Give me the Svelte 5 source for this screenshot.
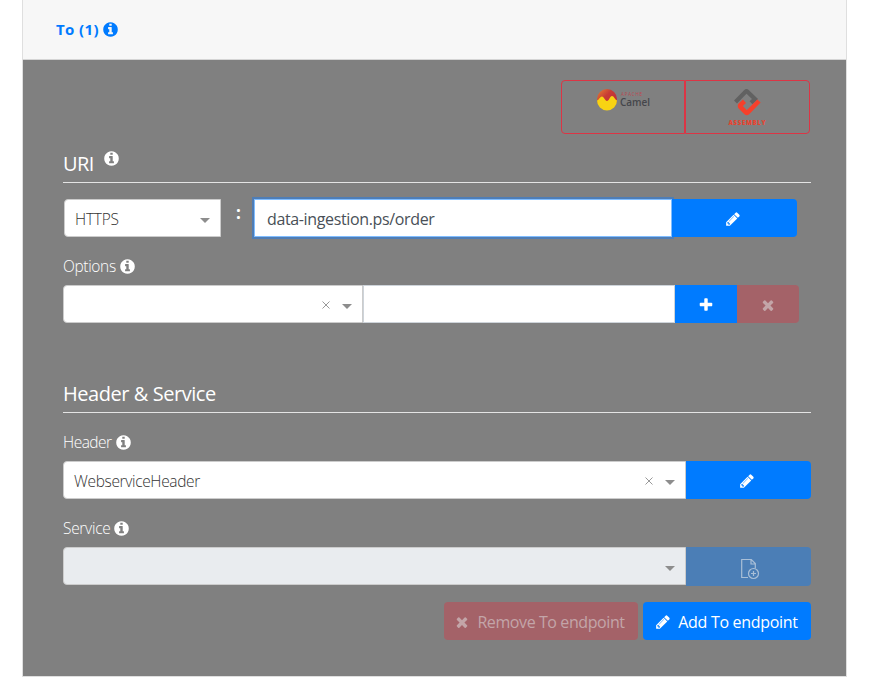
<script>
  const icons = {
    info: 'M1152 1376v-160q0-14-9-23t-23-9h-96v-512q0-14-9-23t-23-9h-320q-14 0-23 9t-9 23v160q0 14 9 23t23 9h96v320h-96q-14 0-23 9t-9 23v160q0 14 9 23t23 9h448q14 0 23-9t9-23zm-128-896v-160q0-14-9-23t-23-9h-192q-14 0-23 9t-9 23v160q0 14 9 23t23 9h192q14 0 23-9t9-23zm640 416q0 209-103 385.5t-279.5 279.5-385.5 103-385.5-103-279.5-279.5-103-385.5 103-385.5 279.5-279.5 385.5-103 385.5 103 279.5 279.5 103 385.5z',
    pencil: 'M491 1536l91-91-235-235-91 91v107h128v128h107zm523-928q0-22-22-22-10 0-17 7l-542 542q-7 7-7 17 0 22 22 22 10 0 17-7l542-542q7-7 7-17zm-54-192l416 416-832 832h-416v-416zm683 96q0 53-37 90l-166 166-416-416 166-165q36-38 90-38 53 0 91 38l235 234q37 39 37 91z',
    plus: 'M1600 736v192q0 40-28 68t-68 28h-416v416q0 40-28 68t-68 28h-192q-40 0-68-28t-28-68v-416h-416q-40 0-68-28t-28-68v-192q0-40 28-68t68-28h416v-416q0-40 28-68t68-28h192q40 0 68 28t28 68v416h416q40 0 68 28t28 68z',
    times: 'M1490 1322q0 40-28 68l-136 136q-28 28-68 28t-68-28l-294-294-294 294q-28 28-68 28t-68-28l-136-136q-28-28-28-68t28-68l294-294-294-294q-28-28-28-68t28-68l136-136q28-28 68-28t68 28l294 294 294-294q28-28 68-28t68 28l136 136q28 28 28 68t-28 68l-294 294 294 294q28 28 28 68z'
  };
  let uri = $state('data-ingestion.ps/order');
  let option = $state('');
</script>

{#snippet icon(name)}
  <svg class="icon {name}" viewBox="0 0 1792 1792" aria-hidden="true"><path d={icons[name]} /></svg>
{/snippet}

{#snippet caret()}
  <svg class="caret" viewBox="0 0 10 5" aria-hidden="true"><path d="M0 0h10L5 5z" /></svg>
{/snippet}

{#snippet clear()}
  <svg class="clear" viewBox="0 0 8 8" aria-hidden="true"><path d="M.5.5l7 7M7.500.5L.5 7.500" /></svg>
{/snippet}

<section class="card">
  <header><a href="#to"><span class="to">To (1)</span>{@render icon('info')}</a></header>
  <div class="body">
    <div class="logos">
      <button class="logo camel" aria-label="Camel">
        <svg viewBox="0 0 122 52">
          <defs>
            <linearGradient id="sky" x1="0" y1="0" x2="1" y2="1">
              <stop offset="0" stop-color="#e68432" />
              <stop offset=".4" stop-color="#c83b35" />
              <stop offset="1" stop-color="#b52540" />
            </linearGradient>
          </defs>
          <circle cx="45" cy="18" r="10" fill="url(#sky)" />
          <path d="M35 19.500c2-.5 3-4 5-4s3 4.500 5 4.500 3-5 5-5 3 3.500 5 4.500a10 10 0 0 1-20 0z" fill="#f8d313" />
          <text x="59" y="15" font-size="4.500" textLength="21" fill="#bd4750">APACHE</text>
          <text x="58" y="25" font-size="10.500" font-weight="600" textLength="30" lengthAdjust="spacingAndGlyphs" fill="#45464b">Camel</text>
        </svg>
      </button>
      <button class="logo" aria-label="Assembly">
        <svg viewBox="0 0 123 52">
          <path d="M49.500 21l10-10.200q1-1 2 0l7.500 7.200-4 3.700" fill="none" stroke="#616161" stroke-width="4.200" />
          <path d="M73 20L61.800 31.300q-1 1-2 0L54.500 26q-1-1 0-2l4-3.700" fill="none" stroke="#f5402b" stroke-width="4.600" />
          <text x="42.500" y="43.500" font-size="6" font-weight="800" textLength="37" fill="#e8432f">ASSEMBLY</text>
        </svg>
      </button>
    </div>

    <h2 class="first"><span class="uri">URI</span><span class="raised">{@render icon('info')}</span></h2>
    <div class="row endpoint">
      <div class="select protocol"><span class="https">HTTPS</span>{@render caret()}</div>
      <b class="colon">:</b>
      <input class="address" aria-label="URI" bind:value={uri} />
      <button class="primary wide end" aria-label="Edit">{@render icon('pencil')}</button>
    </div>

    <div class="label"><span class="l-options">Options</span>{@render icon('info')}</div>
    <div class="row options">
      <div class="select key">{@render clear()}{@render caret()}</div>
      <input class="value" aria-label="Option value" bind:value={option} />
      <button class="primary small" aria-label="Add">{@render icon('plus')}</button>
      <button class="danger small end" disabled aria-label="Remove">{@render icon('times')}</button>
    </div>

    <h2 class="second"><span class="hs">Header &amp; Service</span></h2>
    <div class="label"><span class="l-header">Header</span>{@render icon('info')}</div>
    <div class="row">
      <div class="select grow"><span class="web">WebserviceHeader</span>{@render clear()}{@render caret()}</div>
      <button class="primary wide end" aria-label="Edit header">{@render icon('pencil')}</button>
    </div>

    <div class="label"><span class="l-service">Service</span>{@render icon('info')}</div>
    <div class="row service">
      <div class="select grow off">{@render caret()}</div>
      <button class="primary wide end" disabled aria-label="Create service">
        <svg class="file" viewBox="0 0 20 22" aria-hidden="true">
          <path d="M8 19.500H1.700V1.500h9.600l4 4v5M11 1.700V6h4.300" />
          <circle cx="13.500" cy="15.500" r="5" />
          <path d="M13.500 13v5M11 15.500h5" />
        </svg>
      </button>
    </div>

    <div class="actions">
      <button class="danger remove" disabled>{@render icon('times')}<span class="t-remove">Remove To endpoint</span></button>
      <button class="primary add">{@render icon('pencil')}<span class="t-add">Add To endpoint</span></button>
    </div>
  </div>
</section>

<style>
  :global(body) { background: #fff; overflow: hidden; }
  * { box-sizing: border-box; }
  .card {
    width: 825px;
    height: 677px;
    margin-left: 22px;
    border: 1px solid #dfdfdf;
    border-top: 0;
    color: #fff;
    font: 16px/24px "Open Sans", "Noto Sans", sans-serif;
  }
  header {
    height: 60px;
    padding: 17px 33px 0;
    background: #f7f7f7;
    border-bottom: 1px solid #d5d5d5;
  }
  header a {
    display: flex;
    align-items: center;
    gap: 3px;
    color: #007bff;
    font-size: 15px;
    font-weight: 700;
    text-decoration: none;
  }
  span { white-space: nowrap; }
  .to { letter-spacing: .4px; }
  .icon { width: 16px; height: 16px; fill: currentColor; flex: none; }
  .info { width: 17px; height: 17px; }
  .body { height: 616px; padding: 20px 35px 0 40px; background: #808080; }
  .logos { display: flex; justify-content: flex-end; height: 54px; padding-right: 1px; }
  .logo { width: 125px; padding: 0; background: none; border: 1px solid #dc3545; border-radius: 0 4px 4px 0; }
  .camel { width: 124px; border-radius: 4px 0 0 4px; }
  .logo svg { display: block; width: 100%; height: 52px; }
  h2 {
    display: flex;
    align-items: flex-end;
    margin: 0;
    padding-bottom: 6px;
    border-bottom: 1px solid #e4e4e4;
    font-size: 20px;
    font-weight: 400;
    line-height: 24px;
  }
  .first { height: 49px; gap: 9px; }
  .second { height: 90px; }
  .uri { letter-spacing: -.6px; }
  .hs { letter-spacing: -.45px; }
  .raised { display: flex; padding-bottom: 9px; }
  .row { display: flex; height: 38px; }
  .endpoint { margin-top: 16px; padding: 0 14px 0 1px; }
  .options { padding-right: 12px; }
  .select {
    display: flex;
    align-items: center;
    justify-content: flex-end;
    padding: 2px 10px 0 10px;
    background: #fff;
    border: 1px solid #ccc;
    border-radius: 4px 0 0 4px;
    color: #333;
    font-size: 15.5px;
    font-weight: 300;
  }
  .select > span { margin-right: auto; }
  .https { letter-spacing: -.25px; }
  .web { letter-spacing: -.35px; }
  .protocol { width: 157px; }
  .key { width: 300px; }
  .grow { flex: 1; }
  .off { background: #e9ecef; }
  .caret { width: 10px; height: 5px; fill: #8d8d8d; margin-top: 2px; }
  .clear { width: 8px; height: 8px; margin: 0 12px 0 0; fill: none; stroke: #999; stroke-width: 1; }
  .colon { width: 33px; padding: 2px 0 0 2px; text-align: center; font-size: 17px; }
  input {
    min-width: 0;
    padding: 2px 12px 0;
    background: #fff;
    border: 1px solid #ced4da;
    border-radius: 0;
    color: #495057;
    font: inherit;
    outline: 0;
  }
  .address { position: relative; flex: 1; border-color: #80bdff; box-shadow: 0 0 0 2px #4f7db5; letter-spacing: -.36px; }
  .value { flex: 1; }
  button {
    display: flex;
    align-items: center;
    justify-content: center;
    padding: 0;
    border: 0;
    color: #fff;
    font: inherit;
  }
  .primary { background: #007bff; }
  .danger { background: #dc3545; }
  button:disabled { color: #fff; }
  .primary:disabled { background: #4b7eb6; color: #a9bfd7; }
  .danger:disabled { background: #a46268; color: #c3a5a8; }
  .wide { width: 125px; padding: 2px 3px 0 0; }
  .small { width: 62px; padding-top: 2px; }
  .end { border-radius: 0 4px 4px 0; }
  .endpoint .wide { position: relative; }
  .service .wide { height: 39px; }
  .label {
    display: flex;
    align-items: center;
    gap: 3px;
    height: 48px;
    padding: 17px 0 7px;
    font-size: 15.5px;
    font-weight: 300;
  }
  .l-options { letter-spacing: -.35px; }
  .l-header { letter-spacing: -.5px; }
  .l-service { letter-spacing: -.3px; }
  .file { width: 20px; height: 22px; margin: 3px 0 0 6px; fill: none; stroke: currentColor; stroke-width: 1.2; }
  .actions { display: flex; justify-content: flex-end; gap: 5px; height: 38px; margin-top: 17px; }
  .actions button { gap: 7px; border-radius: 4px; padding: 1px 1px 0 0; }
  .remove { width: 194px; }
  .actions .remove { padding-right: 3px; }
  .add { width: 168px; }
  .t-remove { letter-spacing: -.41px; }
  .t-add { letter-spacing: -.3px; }
</style>
